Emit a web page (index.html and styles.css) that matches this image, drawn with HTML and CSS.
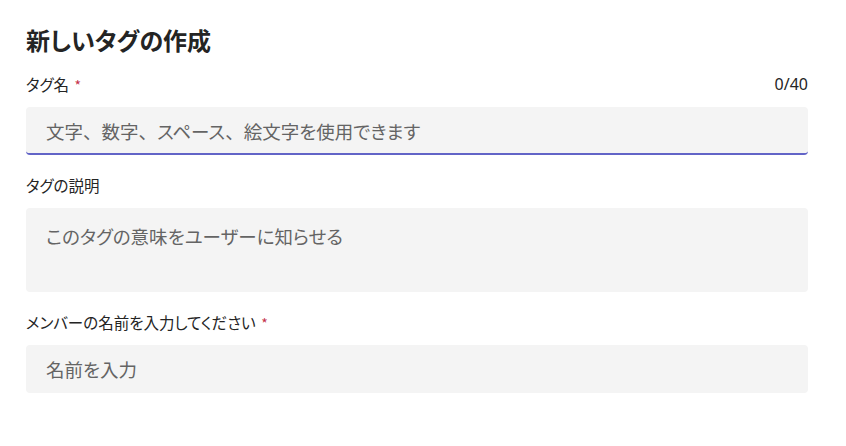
FILE: index.html
```html
<!DOCTYPE html>
<html lang="ja">
<head>
<meta charset="utf-8">
<link rel="stylesheet" href="styles.css">
</head>
<body>
<main class="form">
  <h1 class="title">新しいタグの作成</h1>
  <div class="field">
    <div class="label-row">
      <span class="label">タグ名 <span class="req">*</span></span>
      <span class="count">0/40</span>
    </div>
    <div class="input focused"><span class="ph">文字<span class="punct">、</span>数字<span class="punct">、</span>スペース<span class="punct">、</span>絵文字を使用できます</span></div>
  </div>
  <div class="field">
    <div class="label-row"><span class="label">タグの説明</span></div>
    <div class="input area"><span class="ph">このタグの意味をユーザーに知らせる</span></div>
  </div>
  <div class="field">
    <div class="label-row"><span class="label">メンバーの名前を入力してください <span class="req">*</span></span></div>
    <div class="input"><span class="ph">名前を入力</span></div>
  </div>
</main>
</body>
</html>
```
FILE: styles.css
```css
html, body {
  margin: 0;
  padding: 0;
  background: #ffffff;
}
body {
  font-family: "Noto Sans CJK JP", "Noto Sans", sans-serif;
  font-feature-settings: "palt";
  color: #242424;
}
.form {
  padding: 24px 38px 0 26px;
  display: flex;
  flex-direction: column;
}
.title {
  margin: 0 0 18px 0;
  font-size: 24px;
  line-height: 32px;
  font-weight: 700;
  color: #242424;
}
.field {
  display: flex;
  flex-direction: column;
  margin-bottom: 20px;
}
.label-row {
  display: flex;
  justify-content: space-between;
  align-items: center;
  height: 20px;
  margin-bottom: 13px;
  font-size: 15.5px;
  line-height: 20px;
}
.req {
  color: #c4314b;
  font-size: 14px;
  margin-left: 2px;
}
.count {
  font-family: "Noto Sans", sans-serif;
  font-size: 16px;
  font-feature-settings: normal;
}
.input {
  box-sizing: border-box;
  height: 48px;
  background: #f4f4f4;
  border-radius: 4px;
  padding: 0 20px;
  display: flex;
  align-items: center;
  font-size: 18.5px;
  line-height: 26px;
}
.input.focused {
  border-bottom: 2px solid #6264c7;
  padding-top: 2px;
}
.input.area {
  height: 84px;
  align-items: flex-start;
  padding-top: 15px;
}
.ph {
  color: #646464;
}
.punct {
  font-feature-settings: normal;
}
```
